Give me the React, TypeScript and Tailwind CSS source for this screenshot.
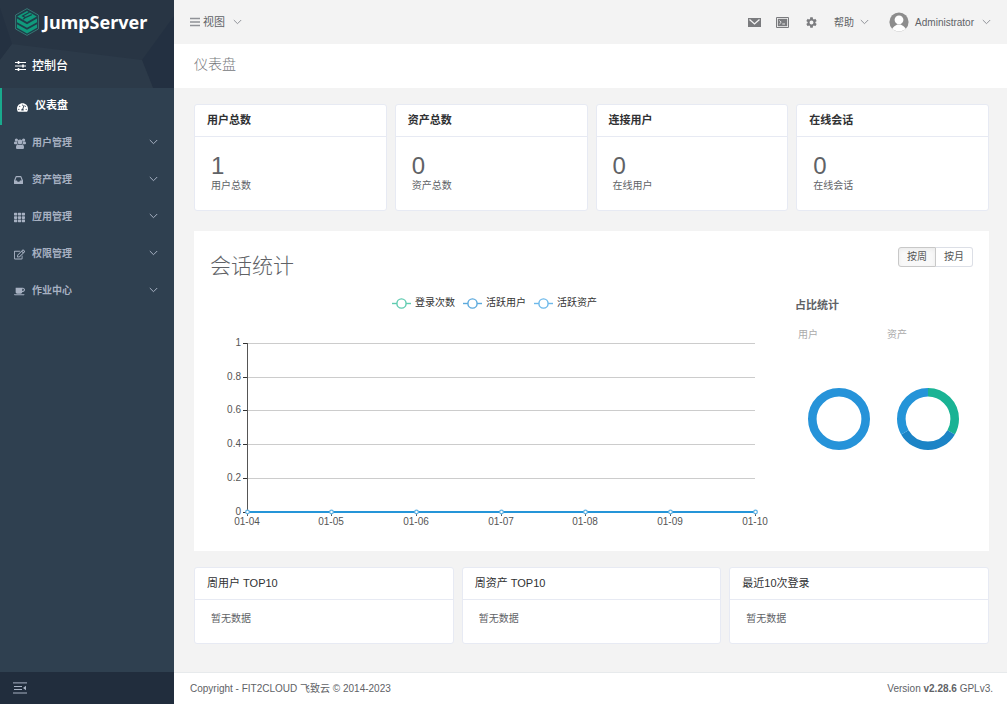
import type { ReactNode } from 'react';
import { FaTachometerAlt, FaTh, FaRegEdit, FaCoffee } from 'react-icons/fa';
import { MdSettings } from 'react-icons/md';

function Chevron({ className = '' }: { className?: string }) {
  return (
    <svg viewBox="0 0 9 6" className={`h-1.5 w-[9px] shrink-0 ${className}`} fill="none" stroke="currentColor" strokeWidth="1">
      <path d="M0.8 1 4.5 4.7 8.2 1" />
    </svg>
  );
}

function LogoMark() {
  return (
    <svg viewBox="0 0 24 28" className="h-7 w-6 shrink-0">
      <path d="M12 .6 23.4 7v14L12 27.4.6 21V7z" fill="#1f3d49" stroke="#3f8580" strokeWidth=".8" />
      <path d="M12 3 21.8 8.4 12 14 2.2 8.4z" fill="#109a7c" />
      <path d="M2 10.6 12 16.2 22 10.6V14.2L12 19.8 2 14.2z" fill="#109a7c" />
      <path d="M2 16.2 12 21.8 22 16.2V19.8L12 25.4 2 19.8z" fill="#109a7c" />
      <path d="M14.5 4.2 7.6 8 10.4 9.6 16.8 6.6M10.4 9.6 8.2 11.2" fill="none" stroke="#1f3d49" strokeWidth="1.2" />
    </svg>
  );
}

function ConsoleIcon() {
  return (
    <svg viewBox="0 0 11 10" className="h-2.5 w-[11px]" fill="none" stroke="currentColor" strokeWidth="1.2">
      <path d="M0 1.5H11M0 5H11M0 8.5H11" />
      <path d="M3.5 0V3M8 3.5V6.5M3.5 7V10" strokeWidth="1.6" />
    </svg>
  );
}

function GroupIcon() {
  return (
    <svg viewBox="0 0 12 11" className="h-[11px] w-3" fill="currentColor">
      <circle cx="2.4" cy="2" r="1.6" />
      <circle cx="9.6" cy="2" r="1.6" />
      <path d="M0 5.6C0 4.2.4 3.4 1.2 3.6H3.2C3 5 3.4 5.8 3.8 6.2H1C.4 6.2 0 6 0 5.6z" />
      <path d="M12 5.6C12 4.2 11.6 3.4 10.8 3.6H8.8C9 5 8.6 5.8 8.2 6.2H11C11.6 6.2 12 6 12 5.6z" />
      <circle cx="6" cy="4" r="2.4" />
      <path d="M2 9.4C2 7.6 2.6 6.2 4 6.4 5.2 7.2 6.8 7.2 8 6.4 9.4 6.2 10 7.6 10 9.4 10 10.4 9.4 11 8.6 11H3.4C2.6 11 2 10.4 2 9.4z" />
    </svg>
  );
}

function TrayIcon() {
  return (
    <svg viewBox="0 0 9 8" className="h-2 w-[9px]" fill="currentColor" fillRule="evenodd">
      <path d="M1.6.6C1.7.2 2 0 2.4 0H6.6C7 0 7.3.2 7.4.6L9 4.6V7.4C9 7.8 8.8 8 8.4 8H.6C.2 8 0 7.8 0 7.4V4.6zM2.5 1.3 1.3 4.6H3L3.6 5.7H5.4L6 4.6H7.7L6.5 1.3z" />
    </svg>
  );
}

const menu: { label: string; icon: ReactNode }[] = [
  { label: '用户管理', icon: <GroupIcon /> },
  { label: '资产管理', icon: <TrayIcon /> },
  { label: '应用管理', icon: <FaTh size={11} /> },
  { label: '权限管理', icon: <FaRegEdit size={11} /> },
  { label: '作业中心', icon: <FaCoffee size={11} /> },
];

function Sidebar() {
  return (
    <aside className="flex w-[174px] shrink-0 flex-col bg-[#2f4050] text-[#a7b1c2]">
      <div className="relative bg-[#283544] text-white">
        <svg viewBox="0 0 174 88" preserveAspectRatio="none" className="absolute inset-0 h-full w-full">
          <path d="M0 0H174V88H0z" fill="#283544" />
          <path d="M0 8 12 44 0 60z" fill="#243141" />
          <path d="M174 16 142 60 153 88H174z" fill="#233041" />
          <path d="M12 44 142 60 153 88H0V60z" fill="#2c3a49" />
        </svg>
        <a href="#home" className="relative flex h-11 items-center gap-1 pl-[15px]">
          <LogoMark />
          <span className="font-['Noto_Sans'] text-lg leading-6 font-bold">JumpServer</span>
        </a>
        <button className="relative flex h-11 w-full items-center gap-1.5 pl-[15px] text-xs font-medium">
          <ConsoleIcon />
          控制台
        </button>
      </div>
      <nav className="flex-1">
        <a href="#dashboard" className="flex h-[37px] items-center border-l-2 border-[#19aa8d] pb-0.5 pl-[15px] text-[11px] font-bold text-white">
          <span className="mt-1 w-[18px]"><FaTachometerAlt size={11} /></span>
          仪表盘
        </a>
        {menu.map((m) => (
          <a key={m.label} href="#menu" className="flex h-[37px] items-center pr-4 pb-[3px] pl-3.5 text-[10px] font-bold">
            <span className="mt-0.5 w-[18px]">{m.icon}</span>
            <span className="flex-1">{m.label}</span>
            <Chevron />
          </a>
        ))}
      </nav>
      <div className="flex h-8 items-center bg-[#212d3d] pl-[13px]">
        <button aria-label="收起菜单" className="text-[#a7b1c2]">
          <svg viewBox="0 0 14 12" className="h-3 w-3.5" fill="none" stroke="currentColor" strokeWidth="1">
            <path d="M0 .9H14M1 4.5H9M1 7.5H9M0 11H14" />
            <path d="M13 3.7V8.3L10 6z" fill="currentColor" stroke="none" />
          </svg>
        </button>
      </div>
    </aside>
  );
}

function TopBar() {
  return (
    <header className="flex h-11 items-center pr-4 pl-4 text-[10px] text-[#606266]">
      <button className="flex items-center text-[11px]">
        <svg viewBox="0 0 10 10" className="mr-[3px] h-2.5 w-2.5" stroke="#909297" strokeWidth="1.6">
          <path d="M0 1.5H10M0 5H10M0 8.5H10" />
        </svg>
        视图
        <Chevron className="ml-2 text-[#909399]" />
      </button>
      <div className="ml-auto flex items-center text-[#7a7b7e]">
        <button aria-label="消息" className="mr-[15px]">
          <svg viewBox="0 0 13 9" className="h-[9px] w-[13px]">
            <path d="M0 0H13V9H0z" fill="currentColor" />
            <path d="M1.5 1.5 6.5 6 11.5 1.5" fill="none" stroke="#f3f3f3" strokeWidth="1.3" />
          </svg>
        </button>
        <button aria-label="终端" className="mr-4">
          <svg viewBox="0 0 13 11" className="h-[11px] w-[13px]">
            <path d="M.5 .5H12.5V10.5H.5z" fill="none" stroke="currentColor" />
            <path d="M1.8 1.8H11.2V9.2H1.8z" fill="currentColor" />
            <path d="M3.4 3.6 5.2 5.3 3.4 7M6.3 7H9" fill="none" stroke="#f3f3f3" strokeWidth=".9" />
          </svg>
        </button>
        <button aria-label="设置" className="mr-4"><MdSettings size={13} /></button>
      </div>
      <button className="mr-5 flex items-center gap-1.5">
        帮助
        <Chevron className="text-[#909399]" />
      </button>
      <button className="flex items-center">
        <svg viewBox="0 0 20 20" className="mr-1.5 h-5 w-5">
          <circle cx="10" cy="10" r="9.6" fill="#8d8d8d" />
          <circle cx="10" cy="7.8" r="4.4" fill="#fff" />
          <path d="M3.2 16.8C4.5 14 7 13.8 8.2 12.5H11.8C13 13.8 15.5 14 16.8 16.8 13 20.5 7 20.5 3.2 16.8z" fill="#fff" />
        </svg>
        Administrator
        <Chevron className="ml-2 text-[#909399]" />
      </button>
    </header>
  );
}

const cardClass = 'rounded-[3px] border border-[#e7eaf3] bg-white';

function StatCard({ title, value, label }: { title: string; value: number; label: string }) {
  return (
    <section className={cardClass}>
      <h2 className="border-b border-[#e7eaf3] px-3 pt-[7px] pb-2 text-[11px] leading-4 font-bold text-[#303133]">{title}</h2>
      <div className="px-4 pt-4 pb-[17px] text-[#606266]">
        <div className="text-2xl leading-[26px]">{value}</div>
        <div className="text-[10px] leading-[14px]">{label}</div>
      </div>
    </section>
  );
}

function ListCard({ title }: { title: string }) {
  return (
    <section className={cardClass}>
      <h2 className="border-b border-[#e7eaf3] px-3 pt-[7px] pb-2 text-[11px] leading-4 text-[#303133]">{title}</h2>
      <p className="px-4 pt-3 pb-[17px] text-[10px] leading-[14px] text-[#606266]">暂无数据</p>
    </section>
  );
}

const series = [
  { name: '登录次数', color: '#5fcbb0' },
  { name: '活跃用户', color: '#5ba9dd' },
  { name: '活跃资产', color: '#6cb8ea' },
];
const days = ['01-04', '01-05', '01-06', '01-07', '01-08', '01-09', '01-10'];
const ticks = ['1', '0.8', '0.6', '0.4', '0.2', '0'];
const dayX = (i: number) => Math.round(37.5 + (i * 508) / 6);

function LineChart() {
  return (
    <svg viewBox="0 0 585 210" className="block w-full text-[10px]">
      {ticks.map((t, i) => {
        const y = Math.round(8 + i * 33.7) + 0.5;
        return (
          <g key={t}>
            {i < 5 && <path d={`M37 ${y}H545`} stroke="#ccc" />}
            <path d={`M33 ${y}H37`} stroke="#333" />
            <text x="31" y={y + 2.5} textAnchor="end" fill="#555">{t}</text>
          </g>
        );
      })}
      <path d="M37.5 8V177" stroke="#555" />
      <path d="M37 177H546" stroke="#2595d8" strokeWidth="2" />
      {days.map((d, i) => (
        <g key={d}>
          <path d={`M${dayX(i) - 0.5} 177V181`} stroke="#555" />
          <circle cx={dayX(i) - 0.5} cy="177" r="1.8" fill="#fff" stroke="#5db1e4" strokeWidth="1.2" />
          <text x={dayX(i) - 1} y="190" textAnchor="middle" fill="#555">{d}</text>
        </g>
      ))}
    </svg>
  );
}

function Donut({ label, parts }: { label: string; parts: string[] }) {
  const share = 100 / parts.length;
  return (
    <div className="w-[90px]">
      <div className="pl-[3px] text-[10px] leading-[14px] text-[#aaa]">{label}</div>
      <svg viewBox="0 0 64 64" className="mt-[45px] ml-3 h-16 w-16 -rotate-90">
        {parts.map((c, i) => (
          <circle
            key={c}
            cx="32"
            cy="32"
            r="26.7"
            fill="none"
            stroke={c}
            strokeWidth="8.6"
            pathLength="100"
            strokeDasharray={`${share} ${100 - share}`}
            strokeDashoffset={-i * share}
          />
        ))}
      </svg>
    </div>
  );
}

function SessionPanel() {
  return (
    <section className="mt-5 bg-white px-4 pt-4 pb-1.5 text-[#606266]">
      <div className="flex items-start justify-between">
        <h2 className="pt-1 text-[21px] leading-[30px] font-light">会话统计</h2>
        <div className="flex text-[10px] leading-[18px] text-[#555]">
          <button className="rounded-l-[3px] border border-[#c8c8c8] bg-[#f8f8f8] px-2 inset-shadow-sm">按周</button>
          <button className="rounded-r-[3px] border border-l-0 border-[#dcdfe6] px-2">按月</button>
        </div>
      </div>
      <div className="flex">
        <div className="min-w-0 flex-1 pt-[15px]">
          <div className="flex justify-center gap-2 pr-4 text-[10px] leading-[14px] text-[#333]">
            {series.map((s) => (
              <span key={s.name} className="flex items-center gap-1">
                <svg viewBox="0 0 19 12" className="h-3 w-[19px]">
                  <path d="M0 6.5H19" stroke={s.color} strokeWidth="1.4" />
                  <circle cx="9.5" cy="6.5" r="4.6" fill="#fff" stroke={s.color} strokeWidth="1.4" />
                </svg>
                {s.name}
              </span>
            ))}
          </div>
          <div className="pt-[25px]"><LineChart /></div>
        </div>
        <div className="w-[178px] shrink-0 pt-4">
          <h3 className="text-[11px] leading-4 font-bold">占比统计</h3>
          <div className="flex pt-[15px]">
            <Donut label="用户" parts={['#2693d9']} />
            <Donut label="资产" parts={['#1ab394', '#1c84c6', '#2494d8']} />
          </div>
        </div>
      </div>
    </section>
  );
}

export default function App() {
  return (
    <div className="flex min-h-screen bg-[#f3f3f3] font-['Liberation_Sans','Noto_Sans_CJK_SC',sans-serif]">
      <Sidebar />
      <div className="flex min-w-0 flex-1 flex-col">
        <TopBar />
        <div className="flex h-11 items-center bg-white px-5 pb-1">
          <h1 className="text-sm font-light text-[#76787c]">仪表盘</h1>
        </div>
        <main className="flex-1 pt-4 pr-[18px] pb-7 pl-5">
          <div className="grid grid-cols-4 gap-2">
            <StatCard title="用户总数" value={1} label="用户总数" />
            <StatCard title="资产总数" value={0} label="资产总数" />
            <StatCard title="连接用户" value={0} label="在线用户" />
            <StatCard title="在线会话" value={0} label="在线会话" />
          </div>
          <SessionPanel />
          <div className="mt-4 grid grid-cols-3 gap-2">
            <ListCard title="周用户 TOP10" />
            <ListCard title="周资产 TOP10" />
            <ListCard title="最近10次登录" />
          </div>
        </main>
        <footer className="flex h-8 items-center justify-between border-t border-[#e7eaec] bg-white pr-3.5 pl-4 text-[10px] text-[#606266]">
          <span>Copyright - FIT2CLOUD 飞致云 © 2014-2023</span>
          <span>Version <strong>v2.28.6</strong> GPLv3.</span>
        </footer>
      </div>
    </div>
  );
}
